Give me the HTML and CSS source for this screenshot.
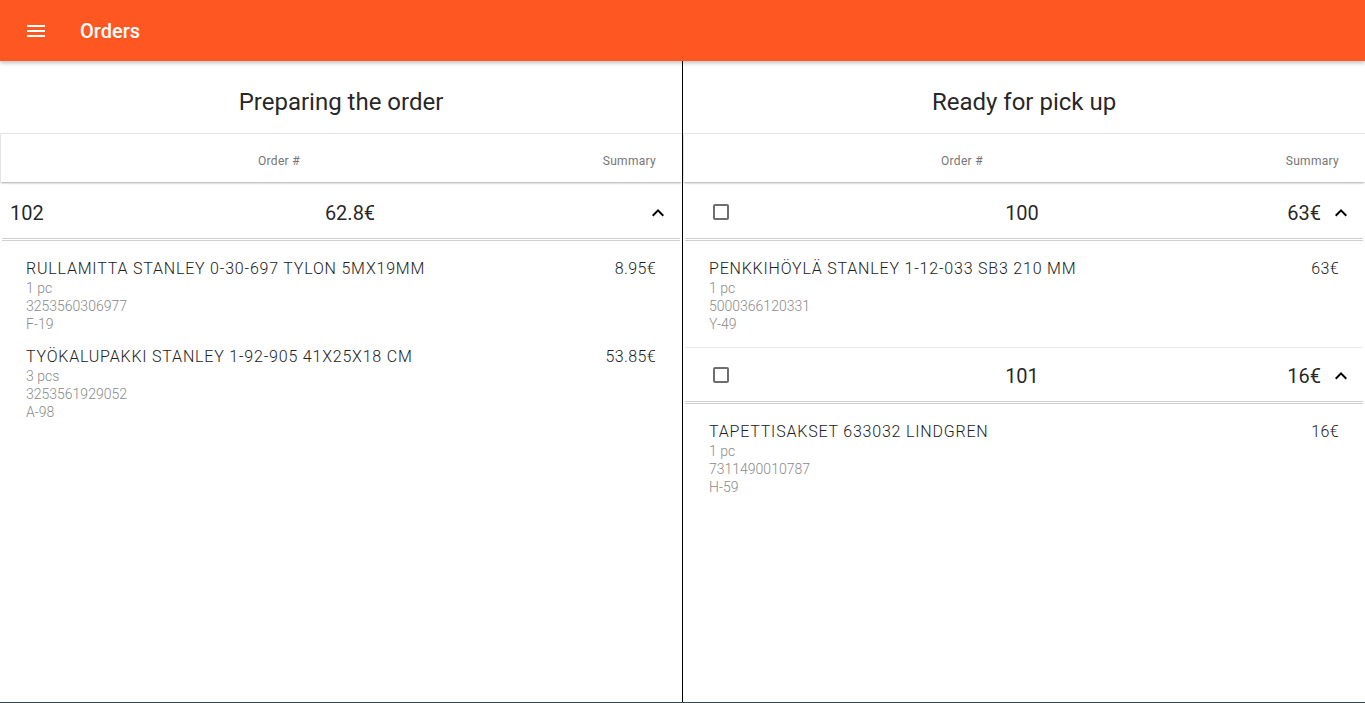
FILE: index.html
```html
<!DOCTYPE html>
<html lang="en">
<head>
    <meta charset="UTF-8">
    <meta name="viewport" content="width=device-width, initial-scale=1.0">
    <title>Orders</title>
    <link rel="stylesheet" href="styles.css">
</head>
<body>
    <header class="toolbar">
        <svg class="menu-icon" viewBox="0 0 24 24" width="24" height="24"><path d="M3 18h18v-2H3v2zm0-5h18v-2H3v2zm0-7v2h18V6H3z" fill="#fff"/></svg>
        <span class="toolbar-title">Orders</span>
    </header>
    <main class="panels">
        <section class="panel panel-left">
            <h2 class="panel-title">Preparing the order</h2>
            <div class="table-head">
                <span class="col-order">Order #</span>
                <span class="col-summary">Summary</span>
            </div>
            <div class="order-row">
                <span class="num">102</span>
                <span class="total">62.8€</span>
                <span class="spacer"></span>
                <svg class="chevron" viewBox="0 0 24 24" width="24" height="24"><path d="M12 8l-6 6 1.41 1.41L12 10.83l4.59 4.58L18 14z"/></svg>
            </div>
            <div class="items">
                <div class="item">
                    <div class="item-info">
                        <div class="item-name">RULLAMITTA STANLEY 0-30-697 TYLON 5MX19MM</div>
                        <div class="item-sub">1 pc</div>
                        <div class="item-sub">3253560306977</div>
                        <div class="item-sub">F-19</div>
                    </div>
                    <div class="item-price">8.95€</div>
                </div>
                <div class="item">
                    <div class="item-info">
                        <div class="item-name">TYÖKALUPAKKI STANLEY 1-92-905 41X25X18 CM</div>
                        <div class="item-sub">3 pcs</div>
                        <div class="item-sub">3253561929052</div>
                        <div class="item-sub">A-98</div>
                    </div>
                    <div class="item-price">53.85€</div>
                </div>
            </div>
        </section>
        <section class="panel panel-right">
            <h2 class="panel-title">Ready for pick up</h2>
            <div class="table-head">
                <span class="col-order">Order #</span>
                <span class="col-summary">Summary</span>
            </div>
            <div class="order-row">
                <span class="check"></span>
                <span class="num">100</span>
                <span class="total">63€</span>
                <svg class="chevron" viewBox="0 0 24 24" width="24" height="24"><path d="M12 8l-6 6 1.41 1.41L12 10.83l4.59 4.58L18 14z"/></svg>
            </div>
            <div class="items">
                <div class="item">
                    <div class="item-info">
                        <div class="item-name">PENKKIHÖYLÄ STANLEY 1-12-033 SB3 210 MM</div>
                        <div class="item-sub">1 pc</div>
                        <div class="item-sub">5000366120331</div>
                        <div class="item-sub">Y-49</div>
                    </div>
                    <div class="item-price">63€</div>
                </div>
            </div>
            <div class="order-row with-top">
                <span class="check"></span>
                <span class="num">101</span>
                <span class="total">16€</span>
                <svg class="chevron" viewBox="0 0 24 24" width="24" height="24"><path d="M12 8l-6 6 1.41 1.41L12 10.83l4.59 4.58L18 14z"/></svg>
            </div>
            <div class="items">
                <div class="item">
                    <div class="item-info">
                        <div class="item-name">TAPETTISAKSET 633032 LINDGREN</div>
                        <div class="item-sub">1 pc</div>
                        <div class="item-sub">7311490010787</div>
                        <div class="item-sub">H-59</div>
                    </div>
                    <div class="item-price">16€</div>
                </div>
            </div>
        </section>
    </main>
    <div class="bottom-line"></div>
</body>
</html>
```

FILE: styles.css
```css
* {
    margin: 0;
    padding: 0;
    box-sizing: border-box;
}
body {
    font-family: Roboto, "Liberation Sans", sans-serif;
    background: #fff;
    color: rgba(0, 0, 0, 0.87);
    height: 100vh;
    display: flex;
    flex-direction: column;
    overflow: hidden;
}
.toolbar {
    height: 61px;
    flex: none;
    background: #ff5722;
    display: flex;
    align-items: center;
    padding-left: 24px;
    box-shadow: 0 2px 4px rgba(0, 0, 0, 0.25);
    position: relative;
    z-index: 2;
}
.menu-icon {
    display: block;
}
.toolbar-title {
    margin-left: 32px;
    color: #fff;
    font-size: 20px;
    font-weight: 500;
}
.panels {
    flex: 1;
    display: grid;
    grid-template-columns: 683px 1fr;
}
.panel {
    min-width: 0;
}
.panel-left {
    border-right: 1px solid #000;
}
.panel-title {
    font-size: 24px;
    font-weight: 400;
    line-height: 28px;
    text-align: center;
    padding: 27px 0 17px;
    color: rgba(0, 0, 0, 0.87);
}
.table-head {
    height: 49px;
    display: flex;
    align-items: center;
    padding-top: 5px;
    border-top: 1px solid #e4e4e4;
    border-left: 1px solid #e4e4e4;
    box-shadow: 0 2px 2px -1px rgba(0, 0, 0, 0.35);
    font-size: 12px;
    font-weight: 400;
    letter-spacing: 0.3px;
    color: #757575;
    padding-right: 26px;
}
.col-order {
    width: 556px;
    text-align: center;
}
.col-summary {
    flex: 1;
    text-align: right;
}
.order-row {
    height: 59px;
    padding-top: 6px;
    display: flex;
    align-items: center;
    font-size: 20px;
    margin: 0 2px;
    border-bottom: 3px double #cfcfcf;
}
.order-row.with-top {
    height: 57px;
    padding-top: 2px;
    border-top: 1px solid #e8e8e8;
}
.panel-left .num {
    width: 300px;
    padding-left: 8px;
}
.panel-left .total {
    width: 96px;
    text-align: center;
}
.spacer {
    flex: 1;
}
.chevron {
    margin-right: 10px;
    flex: none;
}
.check {
    width: 16px;
    height: 16px;
    flex: none;
    border: 2px solid #6e6e6e;
    border-radius: 2px;
    margin-left: 28px;
    margin-top: -2px;
}
.panel-right .num {
    width: 186px;
    margin-left: 200px;
    text-align: center;
}
.panel-right .total {
    flex: 1;
    text-align: right;
    margin-right: 8px;
}
.items {
    padding: 18px 26px 14px 26px;
    display: flex;
    flex-direction: column;
    gap: 14px;
}
.item {
    display: flex;
    justify-content: space-between;
}
.item-name {
    font-size: 16px;
    line-height: 20px;
    letter-spacing: 0.8px;
    font-weight: 300;
    color: #212121;
}
.item-sub {
    font-size: 14px;
    line-height: 18px;
    font-weight: 300;
    color: #8a8a8a;
}
.item-price {
    font-size: 16px;
    line-height: 20px;
    letter-spacing: 0.4px;
    font-weight: 300;
    color: #212121;
}
.bottom-line {
    height: 1px;
    flex: none;
    background: #37474f;
}
```
